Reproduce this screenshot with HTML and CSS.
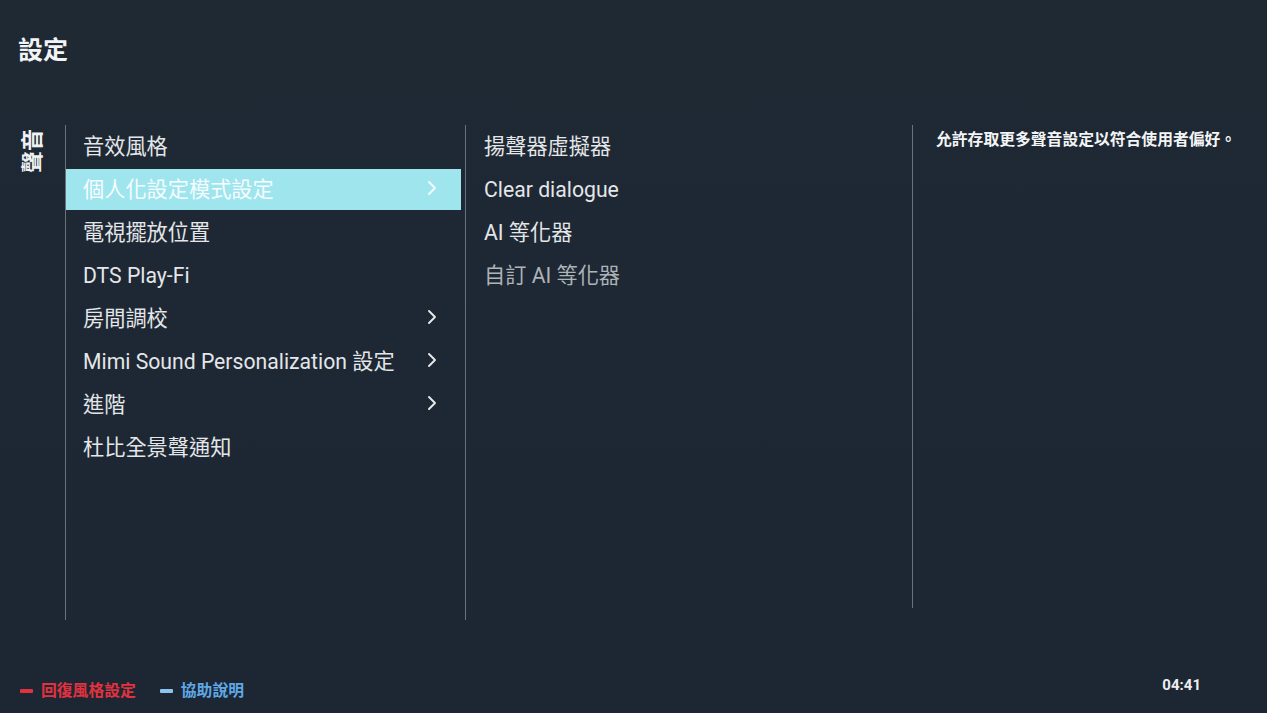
FILE: index.html
```html
<!DOCTYPE html>
<html lang="zh-Hant">
<head>
<meta charset="utf-8">
<title>設定</title>
<link rel="stylesheet" href="styles.css">
</head>
<body>
<div class="screen">
  <header class="header">
    <h1 class="title">設定</h1>
  </header>
  <main class="panes">
    <div class="side">
      <span class="side-label">聲音</span>
    </div>
    <ul class="col col1">
      <li class="item">音效風格</li>
      <li class="item active">個人化設定模式設定<svg class="chev" viewBox="0 0 10 16"><polyline points="2,2 8,8 2,14"/></svg></li>
      <li class="item">電視擺放位置</li>
      <li class="item latin">DTS Play-Fi</li>
      <li class="item">房間調校<svg class="chev" viewBox="0 0 10 16"><polyline points="2,2 8,8 2,14"/></svg></li>
      <li class="item">Mimi Sound Personalization 設定<svg class="chev" viewBox="0 0 10 16"><polyline points="2,2 8,8 2,14"/></svg></li>
      <li class="item">進階<svg class="chev" viewBox="0 0 10 16"><polyline points="2,2 8,8 2,14"/></svg></li>
      <li class="item">杜比全景聲通知</li>
    </ul>
    <ul class="col col2">
      <li class="item">揚聲器虛擬器</li>
      <li class="item latin">Clear dialogue</li>
      <li class="item">AI 等化器</li>
      <li class="item dim">自訂 AI 等化器</li>
    </ul>
    <div class="col col3">
      <p class="desc">允許存取更多聲音設定以符合使用者偏好。</p>
    </div>
  </main>
  <footer class="footer">
    <div class="keys">
      <span class="key red"><i class="dash"></i>回復風格設定</span>
      <span class="key blue"><i class="dash"></i>協助說明</span>
    </div>
    <span class="clock">04:41</span>
  </footer>
</div>
</body>
</html>
```
FILE: styles.css
```css
html, body {
  margin: 0;
  padding: 0;
  height: 100%;
}
body {
  background: linear-gradient(180deg, #1f2934 0%, #1d2834 45%, #1c2733 100%);
  color: #e8eaec;
  font-family: Roboto, "Noto Sans CJK TC", "Noto Sans CJK SC", sans-serif;
  overflow: hidden;
}
.screen {
  height: 713px;
  display: flex;
  flex-direction: column;
}
.header {
  padding: 37px 0 0 18px;
  height: 125px;
  box-sizing: border-box;
  flex: none;
}
.title {
  margin: 0;
  font-size: 25px;
  line-height: 28px;
  font-weight: 700;
  color: #f2f3f4;
}
.panes {
  display: flex;
  height: 495px;
  flex: none;
  align-items: flex-start;
}
.side {
  width: 65px;
  height: 100%;
  padding: 4px 0 0 22px;
  box-sizing: border-box;
}
.side-label {
  display: inline-block;
  writing-mode: vertical-rl;
  text-orientation: sideways;
  transform: rotate(180deg);
  font-size: 22px;
  line-height: 22px;
  font-weight: 700;
  color: #f0f1f2;
}
.col {
  margin: 0;
  padding: 0;
  list-style: none;
  border-left: 1.5px solid #6c727a;
  box-sizing: border-box;
  height: 100%;
}
.col1 {
  width: 400px;
  padding-right: 4px;
}
.col2 {
  width: 447px;
  padding-left: 18px;
}
.col3 {
  flex: 1;
  height: 483px;
  padding: 0 0 0 23px;
}
.item {
  box-sizing: border-box;
  height: 43px;
  padding-bottom: 4px;
  display: flex;
  align-items: center;
  justify-content: space-between;
  font-size: 21.2px;
  color: #e4e6e8;
  white-space: nowrap;
}
.col1 .item {
  padding-left: 17px;
  padding-right: 24px;
}
.item.latin {
  padding-top: 4px;
}
.item.active {
  background: #9ee5ee;
  color: #f7fdfe;
  height: 41px;
  margin: 1px 0;
}
.item.dim {
  color: #aeb3b8;
}
.chev {
  width: 10px;
  height: 16px;
  fill: none;
  stroke: #e8eaec;
  stroke-width: 1.9;
  stroke-linecap: round;
  stroke-linejoin: round;
}
.active .chev {
  stroke: #f4fcfd;
}
.desc {
  margin: 5px 0 0;
  font-size: 15.8px;
  line-height: 20px;
  font-weight: 700;
  color: #f3f4f5;
  white-space: nowrap;
}
.footer {
  flex: 1;
  display: flex;
  justify-content: space-between;
  align-items: flex-end;
  padding: 0 66px 17px 20px;
}
.keys {
  display: flex;
  gap: 24px;
  margin-bottom: -5px;
}
.key {
  display: flex;
  align-items: center;
  gap: 8px;
  font-size: 15.8px;
  line-height: 20px;
  font-weight: 700;
}
.dash {
  display: inline-block;
  width: 13px;
  height: 4px;
  border-radius: 1px;
}
.red { color: #e2323f; }
.red .dash { background: #e2323f; }
.blue { color: #5fa8e6; }
.blue .dash { background: #8cc4f0; }
.clock {
  font-size: 15px;
  line-height: 20px;
  font-weight: 700;
  color: #eceef0;
  margin-bottom: 1px;
}
```
